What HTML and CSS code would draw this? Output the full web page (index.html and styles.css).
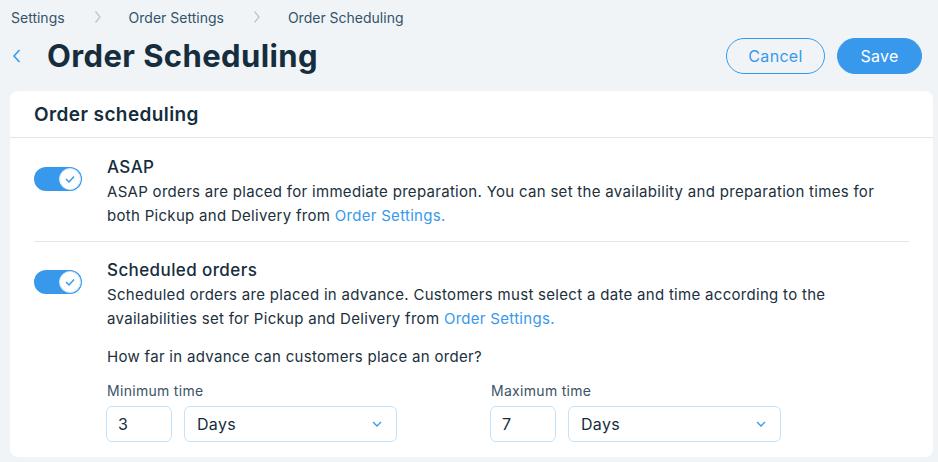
FILE: index.html
```html
<!DOCTYPE html>
<html>
<head>
<meta charset="utf-8">
<link rel="stylesheet" href="styles.css">
</head>
<body>
<nav class="crumbs">
  <span class="crumb">Settings</span>
  <svg class="crumb-sep" width="8" height="14" viewBox="0 0 8 14"><path d="M1.5 1.5 L6 7 L1.5 12.5" fill="none" stroke="#b9c3cd" stroke-width="1.2"/></svg>
  <span class="crumb">Order Settings</span>
  <svg class="crumb-sep" width="8" height="14" viewBox="0 0 8 14"><path d="M1.5 1.5 L6 7 L1.5 12.5" fill="none" stroke="#b9c3cd" stroke-width="1.2"/></svg>
  <span class="crumb">Order Scheduling</span>
</nav>
<header class="page-head">
  <div class="head-left">
    <svg class="back" width="10" height="16" viewBox="0 0 10 16"><path d="M7.5 2 L2 8 L7.5 14" fill="none" stroke="#3899ec" stroke-width="1.6"/></svg>
    <h1 class="title">Order Scheduling</h1>
  </div>
  <div class="actions">
    <button class="btn btn-outline">Cancel</button>
    <button class="btn btn-fill">Save</button>
  </div>
</header>
<main class="card">
  <div class="card-head">Order scheduling</div>
  <div class="card-body">
    <section class="row row-first">
      <div class="toggle"><span class="knob"><svg width="12" height="10" viewBox="0 0 12 10"><path d="M2 5 L5 8 L10 2.5" fill="none" stroke="#3899ec" stroke-width="1.5"/></svg></span></div>
      <div class="row-content">
        <div class="row-title">ASAP</div>
        <p class="desc">ASAP orders are placed for immediate preparation. You can set the availability and preparation times for both Pickup and Delivery from <a class="link">Order Settings.</a></p>
      </div>
    </section>
    <section class="row row-second">
      <div class="toggle"><span class="knob"><svg width="12" height="10" viewBox="0 0 12 10"><path d="M2 5 L5 8 L10 2.5" fill="none" stroke="#3899ec" stroke-width="1.5"/></svg></span></div>
      <div class="row-content">
        <div class="row-title">Scheduled orders</div>
        <p class="desc">Scheduled orders are placed in advance. Customers must select a date and time according to the availabilities set for Pickup and Delivery from <a class="link">Order Settings.</a></p>
        <p class="question">How far in advance can customers place an order?</p>
        <div class="fields">
          <div class="field">
            <div class="label">Minimum time</div>
            <div class="inputs">
              <div class="num">3</div>
              <div class="select"><span>Days</span><svg width="10" height="6" viewBox="0 0 10 6"><path d="M1 1 L5 5 L9 1" fill="none" stroke="#3899ec" stroke-width="1.3"/></svg></div>
            </div>
          </div>
          <div class="field">
            <div class="label">Maximum time</div>
            <div class="inputs">
              <div class="num">7</div>
              <div class="select"><span>Days</span><svg width="10" height="6" viewBox="0 0 10 6"><path d="M1 1 L5 5 L9 1" fill="none" stroke="#3899ec" stroke-width="1.3"/></svg></div>
            </div>
          </div>
        </div>
      </div>
    </section>
  </div>
</main>
</body>
</html>
```
FILE: styles.css
```css
* { box-sizing: border-box; }
body {
  margin: 0;
  background: #f0f4f7;
  font-family: Inter, "Noto Sans", sans-serif;
  color: #162d3d;
  width: 938px;
  height: 462px;
  overflow: hidden;
}
.crumbs {
  display: flex;
  align-items: center;
  height: 34px;
  padding-left: 11px;
  font-size: 14px;
  color: #32536a;
}
.crumb-sep { margin: 0 27px 0 29px; }
.page-head {
  display: flex;
  justify-content: space-between;
  align-items: center;
  height: 44px;
  padding: 0 16px 0 12px;
}
.head-left { display: flex; align-items: center; }
.back { margin-right: 25px; }
.title {
  margin: 0 0 2px;
  font-size: 31px;
  font-weight: 700;
  color: #162d3d;
  letter-spacing: 0.4px;
}
.actions { display: flex; gap: 12px; }
.btn {
  height: 36px;
  border-radius: 18px;
  font-family: inherit;
  font-size: 16px;
  letter-spacing: 0.3px;
  padding: 0;
}
.btn-outline {
  width: 99px;
  background: transparent;
  border: 1px solid #3899ec;
  color: #3899ec;
}
.btn-fill {
  width: 85px;
  background: #3899ec;
  border: 1px solid #3899ec;
  color: #fff;
}
.card {
  margin: 13px 5px 0 10px;
  height: 366px;
  background: #fff;
  border-radius: 8px;
}
.card-head {
  height: 47px;
  padding-left: 24px;
  display: flex;
  align-items: center;
  font-size: 19px;
  font-weight: 600;
  letter-spacing: 0.4px;
  border-bottom: 1px solid #dfe5eb;
}
.card-body { padding: 0 24px; }
.row { display: flex; }
.row-first { padding: 17px 0 13px; border-bottom: 1px solid #e1e6eb; }
.row-second { padding: 16px 0 16px; }
.toggle {
  width: 48px;
  height: 24px;
  margin-top: 12px;
  border-radius: 12px;
  background: #3899ec;
  position: relative;
  flex: none;
}
.knob {
  position: absolute;
  right: 1px;
  top: 1px;
  width: 22px;
  height: 22px;
  border-radius: 50%;
  background: #fff;
  border: 1px solid #d3e8fb;
  display: flex;
  align-items: center;
  justify-content: center;
}
.row-content { margin-left: 25px; flex: 1; }
.row-title { font-size: 17px; font-weight: 500; line-height: 25px; letter-spacing: 0.4px; }
.desc { margin: 0; font-size: 15px; line-height: 24px; color: #20303c; letter-spacing: 0.3px; }
.link { color: #3899ec; }
.question { margin: 14px 0 0; font-size: 15px; line-height: 24px; color: #20303c; letter-spacing: 0.3px; }
.fields { display: flex; gap: 94px; margin-top: 12px; }
.label { font-size: 14px; line-height: 20px; color: #3b5366; letter-spacing: 0.3px; }
.inputs { display: flex; gap: 12px; margin-top: 5px; margin-left: -1px; }
.num, .select {
  height: 36px;
  border: 1px solid #c1e4fe;
  border-radius: 6px;
  display: flex;
  align-items: center;
  padding: 0 11px;
  font-size: 16px;
  letter-spacing: 0.3px;
}
.num { width: 66px; }
.select { width: 213px; justify-content: space-between; padding-left: 12px; padding-right: 14px; }
```
